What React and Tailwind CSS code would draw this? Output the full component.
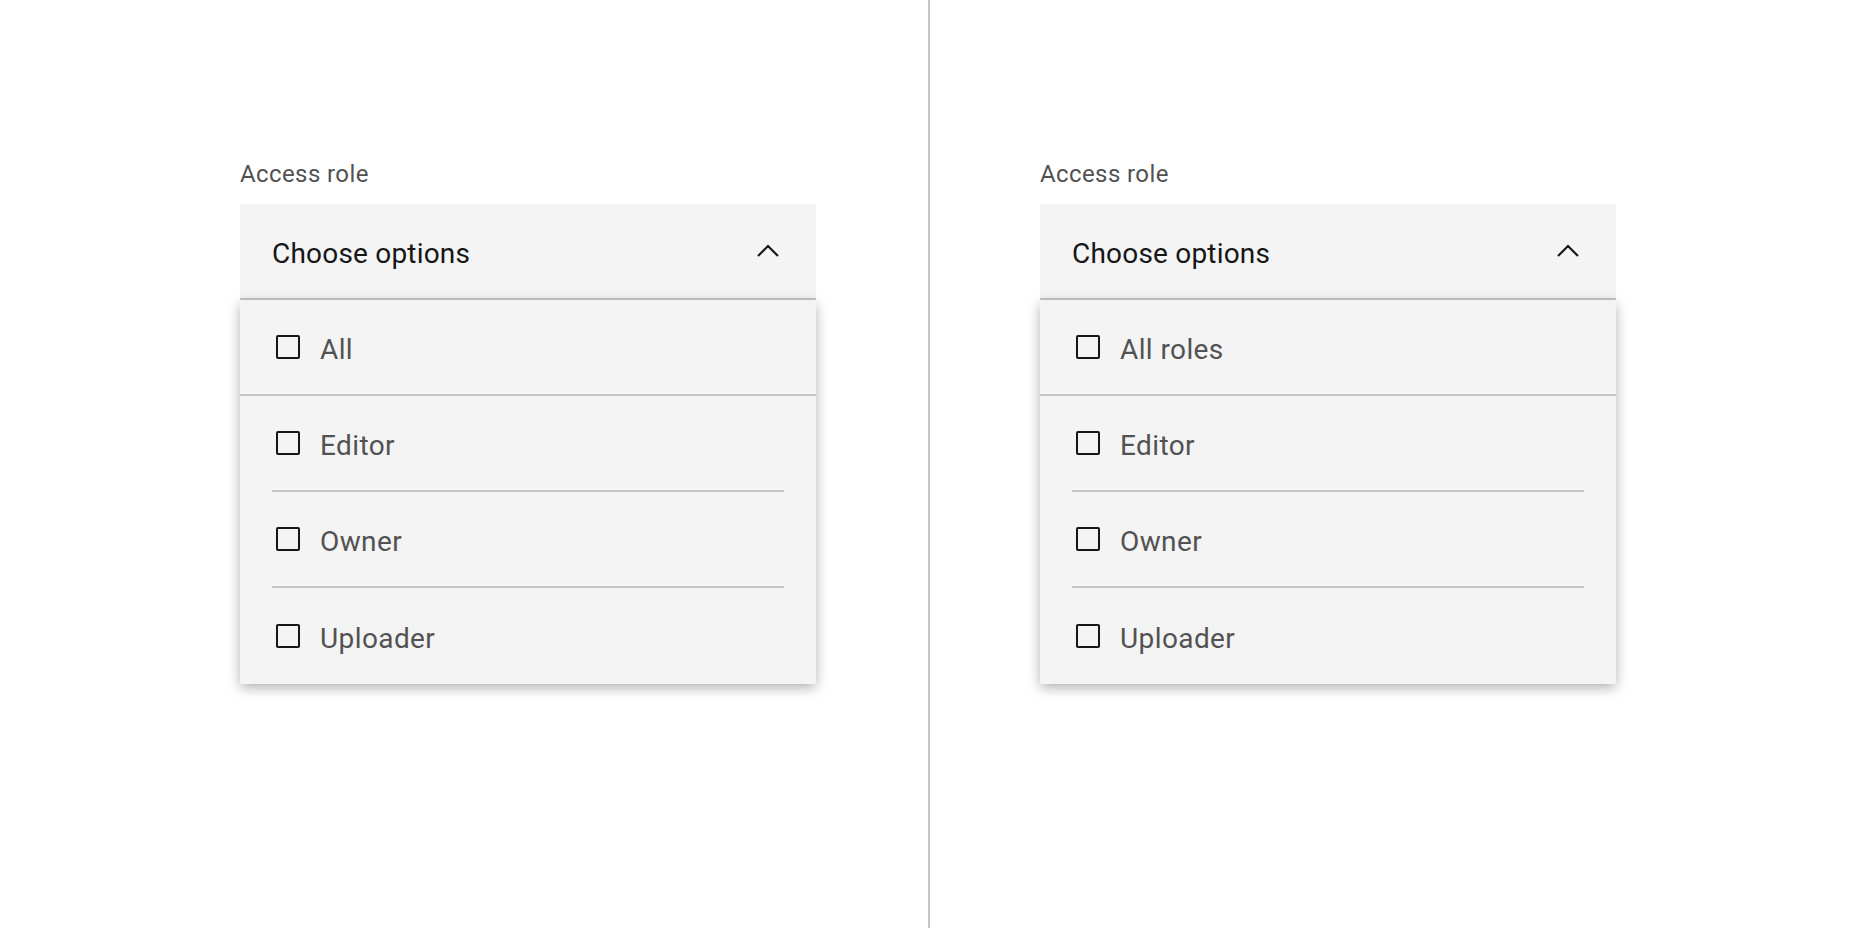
import React from 'react';

const font = { fontFamily: 'Roboto, "Noto Sans", Arial, sans-serif' };

const Checkbox = () => (
  <span className="ml-1 w-6 h-6 shrink-0 border-2 border-[#161616] rounded-[2px]" />
);

const ChevronUp = () => (
  <svg width="32" height="32" viewBox="0 0 32 32" className="shrink-0">
    <path d="M6 21 L16 11 L26 21" fill="none" stroke="#161616" strokeWidth="2.2" />
  </svg>
);

const OptionRow = ({ label, divider }) => (
  <div
    className={`h-24 flex items-center ${
      divider === 'full' ? 'px-8 border-b-2 border-[#c6c6c6]' : ''
    }`}
  >
    <div
      className={`h-full w-full flex items-center ${
        divider === 'inset' ? 'mx-8 border-b-2 border-[#c6c6c6]' : divider === 'none' ? 'px-8' : ''
      }`}
    >
      <Checkbox />
      <span className="ml-5 pt-[5px] text-[28px] leading-none tracking-[0.4px] text-[#525252]">{label}</span>
    </div>
  </div>
);

const MultiSelect = ({ first }) => (
  <div className="w-[576px]">
    <div className="text-[24px] leading-[32px] tracking-[0.4px] text-[#525252] mb-[14px]">Access role</div>
    <div className="h-24 bg-[#f4f4f4] border-b-2 border-[#c6c6c6] flex items-center justify-between pl-8 pr-[32px]">
      <span className="pt-[5px] text-[28px] leading-none tracking-[0.2px] text-[#161616]">Choose options</span>
      <ChevronUp />
    </div>
    <div className="bg-[#f4f4f4] shadow-[0_4px_12px_rgba(0,0,0,0.3)]">
      <OptionRow label={first} divider="full" />
      <OptionRow label="Editor" divider="inset" />
      <OptionRow label="Owner" divider="inset" />
      <OptionRow label="Uploader" divider="none" />
    </div>
  </div>
);

export default function App() {
  return (
    <div className="w-[1856px] h-[928px] bg-white flex" style={font}>
      <div className="w-[928px] h-full pl-[240px] pt-[158px]">
        <MultiSelect first="All" />
      </div>
      <div className="w-[2px] h-full bg-[#c6c6c6]" />
      <div className="flex-1 h-full pl-[110px] pt-[158px]">
        <MultiSelect first="All roles" />
      </div>
    </div>
  );
}
